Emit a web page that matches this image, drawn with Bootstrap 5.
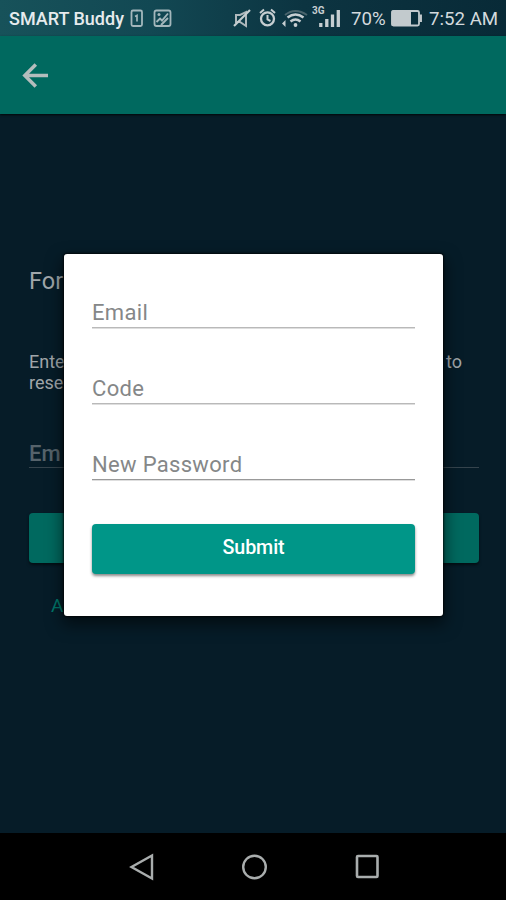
<!DOCTYPE html>
<html lang="en">
<head>
<meta charset="utf-8">
<meta name="viewport" content="width=device-width, initial-scale=1">
<title>Reset password</title>
<link href="https://cdn.jsdelivr.net/npm/bootstrap@5.3.0/dist/css/bootstrap.min.css" rel="stylesheet">
<style>
body { font-family: Roboto, "Liberation Sans", sans-serif; background: #061c28; }
.screen { height: 900px; overflow: hidden; }
.status { height: 36px; padding-left: 9px; color: #d3dadd; font-size: 18.7px; line-height: 36px; background: linear-gradient(90deg, #17525a 0, #124853 30%, #0c3441 60%, #082a37 100%); white-space: nowrap; }
.status svg, .status span { flex: none; }
.status span { padding-top: 2px; }
.status .carrier { width: 121px; font-weight: 500; font-size: 18px; color: #e6ebed; }
.status .charge { width: 40px; }
.toolbar { height: 78px; padding: 2px 0 0 22px; background: #00695f; box-shadow: 0 1px 2px #000c; }
.under { padding: 152px 27px 0 29px; color: #a0a6aa; }
.under-title { font-size: 23.5px; line-height: 30px; height: 84px; }
.under-copy { font-size: 18px; line-height: 21px; height: 88px; padding: 1px 17px 0 0; }
.under-field { height: 30px; border-bottom: 1px solid #35444d; color: #56636b; font-size: 22px; line-height: 32px; font-weight: 500; }
.under-btn { height: 50px; margin-top: 45px; border-radius: 4px; background: #00695f; box-shadow: 0 2px 3px #0008; }
.under-link { color: #00766a; font-size: 19px; line-height: 24px; margin: 31px 0 0 22px; }
.sysbar { height: 67px; background: #000; padding-left: 129px; gap: 85px; }
.sheet { left: 64px; top: 254px; width: 379px; height: 362px; border-radius: 3px; padding: 40px 28px 0; background: #fff; box-shadow: 0 0 2px 1px #000a, 0 7px 16px 2px #0008; }
.field { height: 34px; margin-bottom: 42px; padding: 3px 0 0; border: 0; border-bottom: 1px solid #b9b9b9; border-radius: 0; box-shadow: 0 1px 0 #dedede; background: transparent; font-size: 22px; letter-spacing: .32px; line-height: 30px; color: #757575; }
.field::placeholder { color: #858788; opacity: 1; }
.field:last-of-type { border-color: #999; margin-bottom: 44px; }
.submit { height: 50px; padding: 0 0 2px; border: 0; border-radius: 4px; background: #009688; color: #fff; font-size: 19.7px; font-weight: 500; letter-spacing: -.1px; box-shadow: 0 2px 3px #0007; }
</style>
<script src="https://cdn.jsdelivr.net/npm/bootstrap@5.3.0/dist/js/bootstrap.bundle.min.js"></script>
</head>
<body>
<div class="screen position-relative d-flex flex-column">
  <header class="status d-flex align-items-center">
    <span class="carrier">SMART Buddy</span>
    <!-- SIM, picture, muted, alarm, wifi and signal glyphs -->
    <svg width="103" height="36" viewBox="130 0 103 36" fill="none" stroke="#a4b7bc" stroke-width="1.8">
      <rect x="131.5" y="10.5" width="10.5" height="15.5" rx="1.5"/><path d="M135 16.500l2-1v6" stroke-width="1.700"/>
      <rect x="154.500" y="10.500" width="16" height="15.500" rx="2"/>
      <path d="M156.500 22l3.500-3.500 2 2 6-7M161 25l7-7" stroke-width="1.900"/><circle cx="159" cy="14.500" r="1.500" fill="#a4b7bc" stroke="none"/>
    </svg>
    <svg width="118" height="36" viewBox="233 0 118 36" fill="none" stroke="#c6ced1" stroke-width="2">
      <path d="M236 15v7h4l6 4V12l-6 3z" stroke="#aeb8bc"/><path d="M234 26l16-16" stroke-width="2.200"/>
      <circle cx="267.500" cy="18.800" r="6.500" stroke-width="2.300"/><path d="M267.500 15v4.500l3 1.500M260 13l4-3.500M275 13l-4-3.500"/>
      <path d="M285 15Q295 7 307 15" stroke="#49646c"/><path d="M287.500 17.500Q295.500 11.500 303.500 17.500M290.500 21.500Q295.500 17.500 300.500 21.500" stroke-width="2.500"/>
      <circle cx="295.500" cy="25" r="1.900" fill="#c6ced1" stroke="none"/>
      <path d="M285.500 20v7l-3.500-3.500z" fill="#c6ced1" stroke="none"/>
      <path d="M320.800 23v4M326.800 19v8M332.500 14.500v12.500M338.300 10v17" stroke-width="3.300"/>
      <text x="312" y="14" font-family="Roboto,sans-serif" font-size="10" font-weight="700" fill="#c6ced1" stroke="none">3G</text>
    </svg>
    <span class="charge">70%</span>
    <svg width="38" height="36" viewBox="391 0 38 36" fill="none" stroke="#c2cacd" stroke-width="1.800">
      <rect x="392" y="11" width="27" height="14.500" rx="1.500"/><path d="M392 11h18.500v14.500h-18.500z" fill="#c2cacd" stroke-width="1"/><path d="M420.700 14.500v7.500" stroke-width="2.500"/>
    </svg>
    <span>7:52 AM</span>
  </header>
  <nav class="toolbar d-flex align-items-center">
    <svg width="26" height="26" viewBox="0 0 26 26" fill="none" stroke="#b4bdbd" stroke-width="3.500"><path d="M26 12.500H3M13.800 1.500l-11 11 11 11"/></svg>
  </nav>
  <main class="under flex-grow-1">
    <div class="under-title">For</div>
    <div class="under-copy"><div class="d-flex justify-content-between"><span>Ente</span><span>to</span></div><div>rese</div></div>
    <div class="under-field">Em</div>
    <div class="under-btn"></div>
    <div class="under-link">A</div>
  </main>
  <footer class="sysbar d-flex align-items-center">
    <svg width="28" height="28" viewBox="0 0 28 28" fill="none" stroke="#a9adad" stroke-width="2.400"><path d="M23 2.500v23L2.500 14z"/></svg>
    <svg width="28" height="28" viewBox="-1 0 28 28" fill="none" stroke="#a9adad" stroke-width="2.400"><circle cx="11.500" cy="14" r="11.300"/></svg>
    <svg width="28" height="28" viewBox="0 0 28 28" fill="none" stroke="#a9adad" stroke-width="2.600"><rect x="2" y="3" width="20.500" height="21" rx="1"/></svg>
  </footer>
  <form class="sheet position-absolute">
    <input class="form-control field" type="text" placeholder="Email" aria-label="Email">
    <input class="form-control field" type="text" placeholder="Code" aria-label="Code">
    <input class="form-control field" type="text" placeholder="New Password" aria-label="New Password">
    <button class="btn submit w-100" type="button">Submit</button>
  </form>
</div>
</body>
</html>
